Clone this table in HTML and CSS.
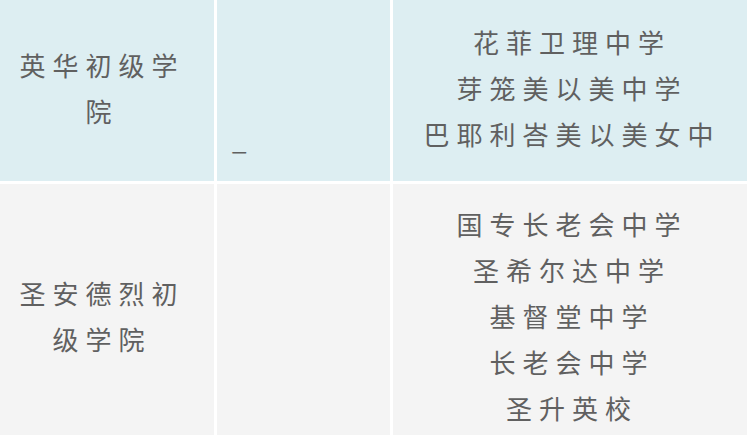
FILE: index.html
```html
<!DOCTYPE html>
<html lang="zh-CN">
<head>
<meta charset="utf-8">
<link rel="stylesheet" href="styles.css">
</head>
<body>
<div class="table">
  <div class="cell row1 name"><span>英华初级学院</span></div>
  <div class="cell row1 mid"><span>_</span></div>
  <div class="cell row1 list">
    <div>花菲卫理中学</div>
    <div>芽笼美以美中学</div>
    <div>巴耶利峇美以美女中</div>
  </div>
  <div class="cell row2 name"><span>圣安德烈初级学院</span></div>
  <div class="cell row2 mid"></div>
  <div class="cell row2 list">
    <div>国专长老会中学</div>
    <div>圣希尔达中学</div>
    <div>基督堂中学</div>
    <div>长老会中学</div>
    <div>圣升英校</div>
  </div>
</div>
</body>
</html>
```

FILE: styles.css
```css
html, body {
  margin: 0;
  padding: 0;
  background: #ffffff;
  overflow: hidden;
}

.table {
  display: grid;
  grid-template-columns: 214px 173px 1fr;
  grid-template-rows: 181px 269px;
  gap: 3px;
  width: 747px;
  font-family: "Noto Sans CJK SC", "Noto Sans", sans-serif;
  font-size: 26px;
  line-height: 46px;
  letter-spacing: 7px;
  color: #606060;
}

.cell {
  display: flex;
  flex-direction: column;
  justify-content: center;
  text-align: center;
}

.row1 { background: #ddeef2; }
.row2 { background: #f4f4f4; }

.name {
  padding: 0 25px 5px 15px;
}

.mid {
  justify-content: flex-end;
  text-align: left;
  padding: 0 0 19px 15px;
}

.list {
  padding: 0 0 5px 4px;
}
```
